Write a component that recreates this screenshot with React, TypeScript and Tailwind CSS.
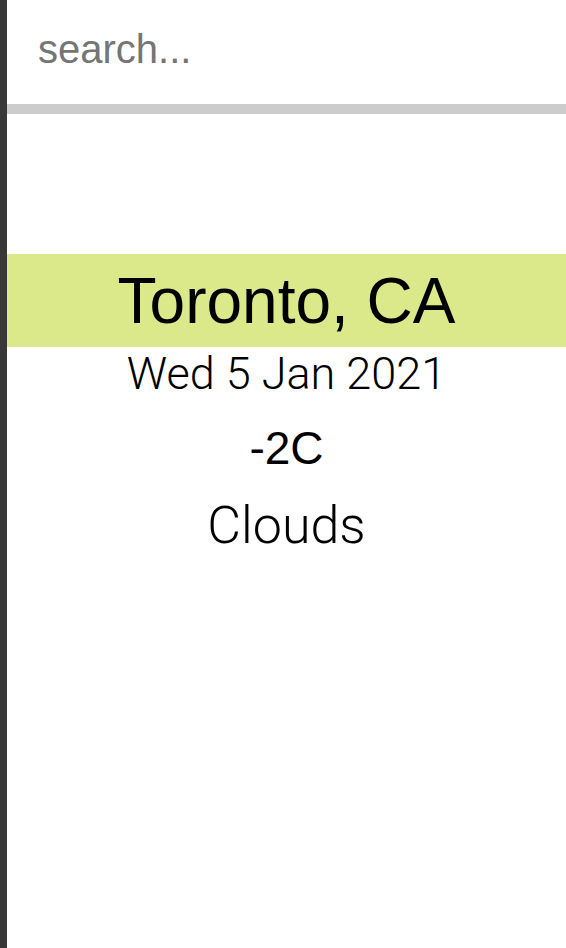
import React, { useState } from "react";

const App: React.FC = () => {
  const [query, setQuery] = useState("");

  return (
    <div
      className="min-h-[948px] w-full bg-white border-l-[7px] border-[#383838] flex flex-col"
      style={{ fontFamily: '"Liberation Sans", Arial, sans-serif' }}
    >
      <input
        type="text"
        value={query}
        onChange={(e) => setQuery(e.target.value)}
        placeholder="search..."
        className="h-[114px] w-full pl-[31px] pb-[5px] text-[40px] text-black placeholder:text-[#757575] border-b-[10px] border-[#cccccc] outline-none"
      />

      <div className="mt-[140px] flex flex-col items-center text-black">
        <h1 className="w-full h-[93px] bg-[#dbe98b] flex items-center justify-center text-[64px] leading-none pt-[1px]">
          Toronto, CA
        </h1>
        <p className="mt-[4px] text-[45px] font-light leading-none" style={{ fontFamily: "Roboto, sans-serif" }}>
          Wed 5 Jan 2021
        </p>
        <p className="mt-[29px] text-[46px] leading-none">-2C</p>
        <p className="mt-[29px] text-[52px] font-light leading-none" style={{ fontFamily: "Roboto, sans-serif" }}>
          Clouds
        </p>
      </div>
    </div>
  );
};

export default App;
